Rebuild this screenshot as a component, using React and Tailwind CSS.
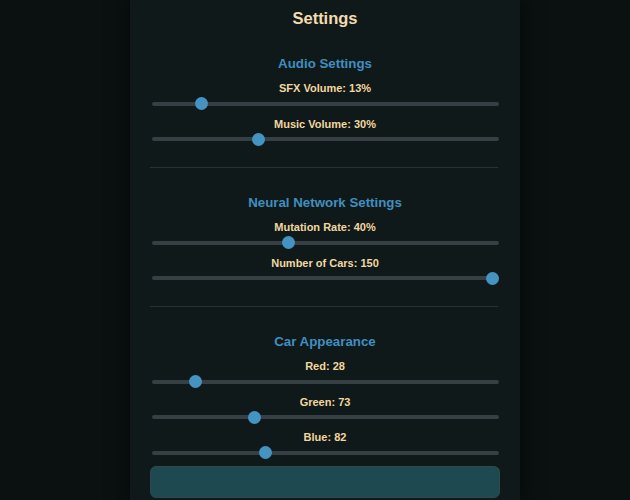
import React from 'react';

const sections = [
  {
    title: 'Audio Settings',
    controls: [
      { label: 'SFX Volume: 13%', pos: 0.13 },
      { label: 'Music Volume: 30%', pos: 0.3 },
    ],
  },
  {
    title: 'Neural Network Settings',
    controls: [
      { label: 'Mutation Rate: 40%', pos: 0.39 },
      { label: 'Number of Cars: 150', pos: 1 },
    ],
  },
  {
    title: 'Car Appearance',
    controls: [
      { label: 'Red: 28', pos: 28 / 255 },
      { label: 'Green: 73', pos: 73 / 255 },
      { label: 'Blue: 82', pos: 82 / 255 },
    ],
  },
];

function Slider({ label, pos }) {
  return (
    <div className="flex flex-col mb-[6px]">
      <div className="text-center text-[11px] leading-[14px] font-bold text-[#f2d7a0]">{label}</div>
      <div className="mt-[1.5px] ml-[2px] mr-[1px] h-[14px] relative flex items-center">
        <div className="w-full h-[4px] rounded-full bg-[#363f44]" />
        <div
          className="absolute top-[0.5px] w-[13px] h-[13px] rounded-full bg-[#4593c1]"
          style={{ left: `calc(${pos} * (100% - 13px))` }}
        />
      </div>
    </div>
  );
}

export default function App() {
  return (
    <div
      className="w-[630px] h-[500px] bg-[#0b1111] flex pl-[130px] overflow-hidden"
      style={{ fontFamily: '"Liberation Sans", Arial, sans-serif' }}
    >
      <div className="relative w-[390px] h-[500px] bg-[#101919] px-5 pt-[8px] flex flex-col shadow-[0_0_18px_6px_rgba(0,0,0,0.45)]">
        <span className="absolute right-[20px] top-[-15px] text-[16px] leading-[16px] text-[#5d6668]">×</span>
        <h1 className="text-center text-[16.5px] leading-[20px] font-bold text-[#f3dcb0]">Settings</h1>

        {sections.map((s, i) => (
          <div key={s.title} className="flex flex-col">
            {i > 0 && <div className="mt-[15px] h-px bg-[#283234] mr-[2px]" />}
            <h2 className={`${i === 0 ? 'mt-[27px]' : 'mt-[26px]'} mb-[8px] text-center text-[13.3px] leading-[18px] font-bold text-[#3f8fc0]`}>
              {s.title}
            </h2>
            {s.controls.map((c) => (
              <Slider key={c.label} label={c.label} pos={c.pos} />
            ))}
          </div>
        ))}

        <button className="mt-[0.5px] w-full h-[32px] shrink-0 rounded-[6px] bg-[#1e4950] border border-[#30474b]" />
      </div>
    </div>
  );
}
